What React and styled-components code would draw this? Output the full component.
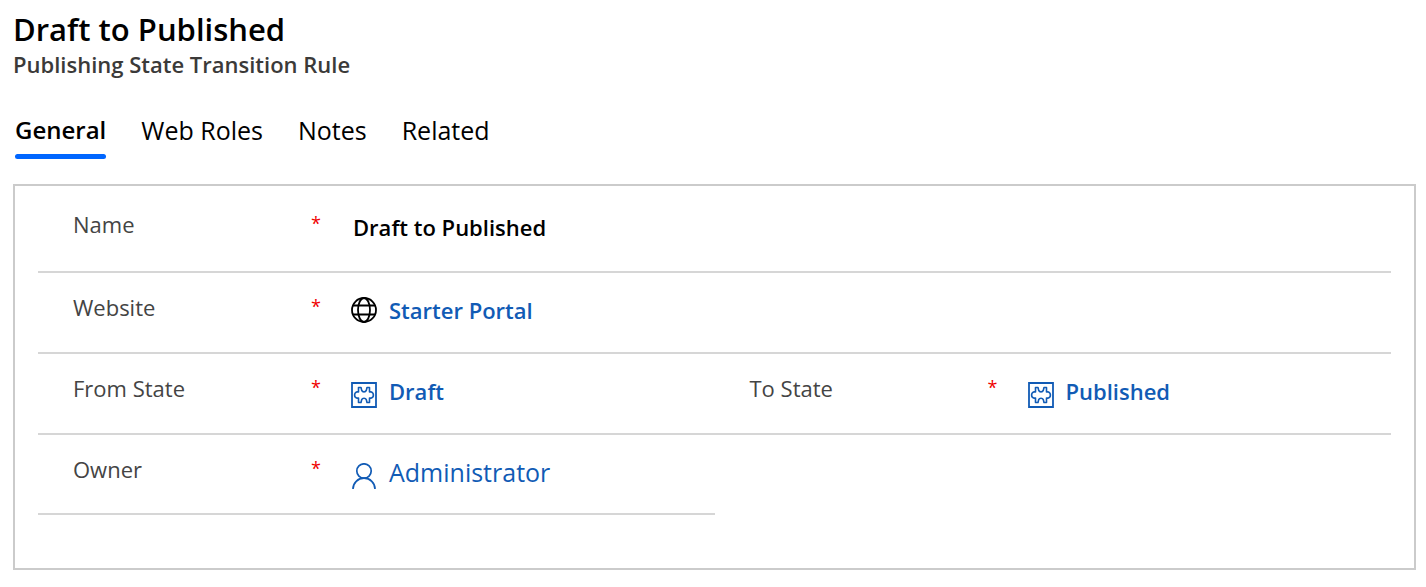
import React, { useState } from "react";
import styled, { createGlobalStyle } from "styled-components";

const GlobalStyle = createGlobalStyle`
  * { box-sizing: border-box; }
  body {
    margin: 0;
    background: #fff;
    color: #000;
    font-family: "Segoe UI", "Open Sans", "Noto Sans", sans-serif;
  }
`;

const Page = styled.main`
  padding: 8px 10px 16px 13px;
`;

const Title = styled.h1`
  margin: 0;
  font-size: 31px;
  line-height: 42px;
  font-weight: 600;
`;

const Subtitle = styled.p`
  margin: 0;
  font-size: 22px;
  line-height: 28px;
  font-weight: 600;
  color: #3b3a39;
`;

const Tabs = styled.div`
  display: flex;
  gap: 35px;
  margin: 34px 0 25px 2px;
`;

const Tab = styled.button`
  padding: 0;
  border: 0;
  background: none;
  color: #000;
  font-family: inherit;
  font-size: ${(p) => (p.$active ? 24 : 25)}px;
  line-height: 36px;
  font-weight: ${(p) => (p.$active ? 600 : 400)};
  cursor: pointer;

  &::after {
    content: "";
    display: block;
    height: 5px;
    margin-top: 6px;
    border-radius: 3px;
    background: ${(p) => (p.$active ? "#0066ff" : "transparent")};
  }
`;

const Panel = styled.section`
  border: 2px solid #cbcbcb;
  padding: 4px 23px 53px;
`;

const Row = styled.div`
  display: grid;
  grid-template-columns: ${(p) => (p.$half ? "50%" : p.$split ? "1fr 1fr" : "1fr")};
  min-height: ${(p) => (p.$tall ? 83 : p.$half ? 80 : 81)}px;
`;

const Field = styled.div`
  display: grid;
  grid-template-columns: 238px 40px minmax(0, 1fr);
  align-items: start;
  padding: 18px 0 0 35px;
  border-bottom: 2px solid #d6d6d6;
`;

const Label = styled.label`
  font-size: 22px;
  line-height: 32px;
  color: #444;
`;

const Required = styled.span`
  font-size: 18px;
  line-height: 30px;
  color: #f00000;
`;

const Value = styled.div`
  display: flex;
  align-items: center;
  gap: 12px;
  height: 38px;
`;

const TextInput = styled.input`
  width: 100%;
  height: 38px;
  padding: 0 0 0 2px;
  border: 0;
  outline: 0;
  background: transparent;
  color: #000;
  font-family: inherit;
  font-size: 22px;
  font-weight: 600;
`;

const Link = styled.a`
  color: #115bb5;
  font-size: ${(p) => (p.$plain ? 25 : 22)}px;
  line-height: ${(p) => (p.$plain ? 40 : 38)}px;
  font-weight: ${(p) => (p.$plain ? 400 : 600)};
  text-decoration: none;
`;

const Icon = styled.svg`
  flex: none;
  width: 26px;
  height: 26px;
  fill: none;
  stroke: ${(p) => p.$color || "#115bb5"};
  stroke-width: 2;
`;

const LowIcon = styled(Icon)`
  align-self: flex-end;
  margin-bottom: 2px;
`;

const Globe = () => (
  <Icon viewBox="0 0 26 26" $color="#000" aria-hidden="true">
    <g strokeWidth="1.8">
      <circle cx="13" cy="13" r="12" />
      <ellipse cx="13" cy="13" rx="6" ry="12" />
      <path d="M2 8.500h22M2 17.500h22" />
    </g>
  </Icon>
);

const Puzzle = () => (
  <LowIcon viewBox="0 0 26 26" aria-hidden="true">
    <path strokeWidth="1.8" d="M1 1h24v24H1z" />
    <path
      strokeWidth="1.6"
      strokeLinejoin="round"
      d="M7.500 5.500H10L10.700 8.400C11.500 10.300 14.500 10.300 15.300 8.400L16 5.500H18.500V9.900H20.300C21.600 10.300 22.400 11.600 22.400 13S21.600 15.700 20.300 16.100H18.500V20.500H16L15.300 17.600C14.500 15.700 11.500 15.700 10.700 17.600L10 20.500H7.500V16.100H5.700C4.400 15.700 3.600 14.400 3.600 13S4.400 10.300 5.700 9.900H7.500Z"
    />
  </LowIcon>
);

const Person = () => (
  <LowIcon viewBox="0 0 26 26" aria-hidden="true">
    <g strokeWidth="1.7">
      <circle cx="13" cy="8" r="7.200" />
      <path d="M2 26C2 19.800 6.900 15.200 13 15.200S24 19.800 24 26" />
    </g>
  </LowIcon>
);

function Lookup({ id, label, icon, text, plain }) {
  return (
    <Field>
      <Label as="span" id={id}>{label}</Label>
      <Required>*</Required>
      <Value>
        {icon}
        <Link href="#" aria-describedby={id} $plain={plain}>{text}</Link>
      </Value>
    </Field>
  );
}

const tabs = ["General", "Web Roles", "Notes", "Related"];

export default function App() {
  const [active, setActive] = useState("General");
  const [name, setName] = useState("Draft to Published");

  return (
    <>
      <GlobalStyle />
      <Page>
        <Title>Draft to Published</Title>
        <Subtitle>Publishing State Transition Rule</Subtitle>
        <Tabs role="tablist">
          {tabs.map((t) => (
            <Tab key={t} role="tab" aria-selected={t === active} $active={t === active} onClick={() => setActive(t)}>
              {t}
            </Tab>
          ))}
        </Tabs>
        <Panel>
          <Row $tall>
            <Field>
              <Label htmlFor="name">Name</Label>
              <Required>*</Required>
              <TextInput id="name" value={name} onChange={(e) => setName(e.target.value)} />
            </Field>
          </Row>
          <Row>
            <Lookup id="website" label="Website" icon={<Globe />} text="Starter Portal" />
          </Row>
          <Row $split>
            <Lookup id="from" label="From State" icon={<Puzzle />} text="Draft" />
            <Lookup id="to" label="To State" icon={<Puzzle />} text="Published" />
          </Row>
          <Row $half>
            <Lookup id="owner" label="Owner" icon={<Person />} text="Administrator" plain />
          </Row>
        </Panel>
      </Page>
    </>
  );
}
